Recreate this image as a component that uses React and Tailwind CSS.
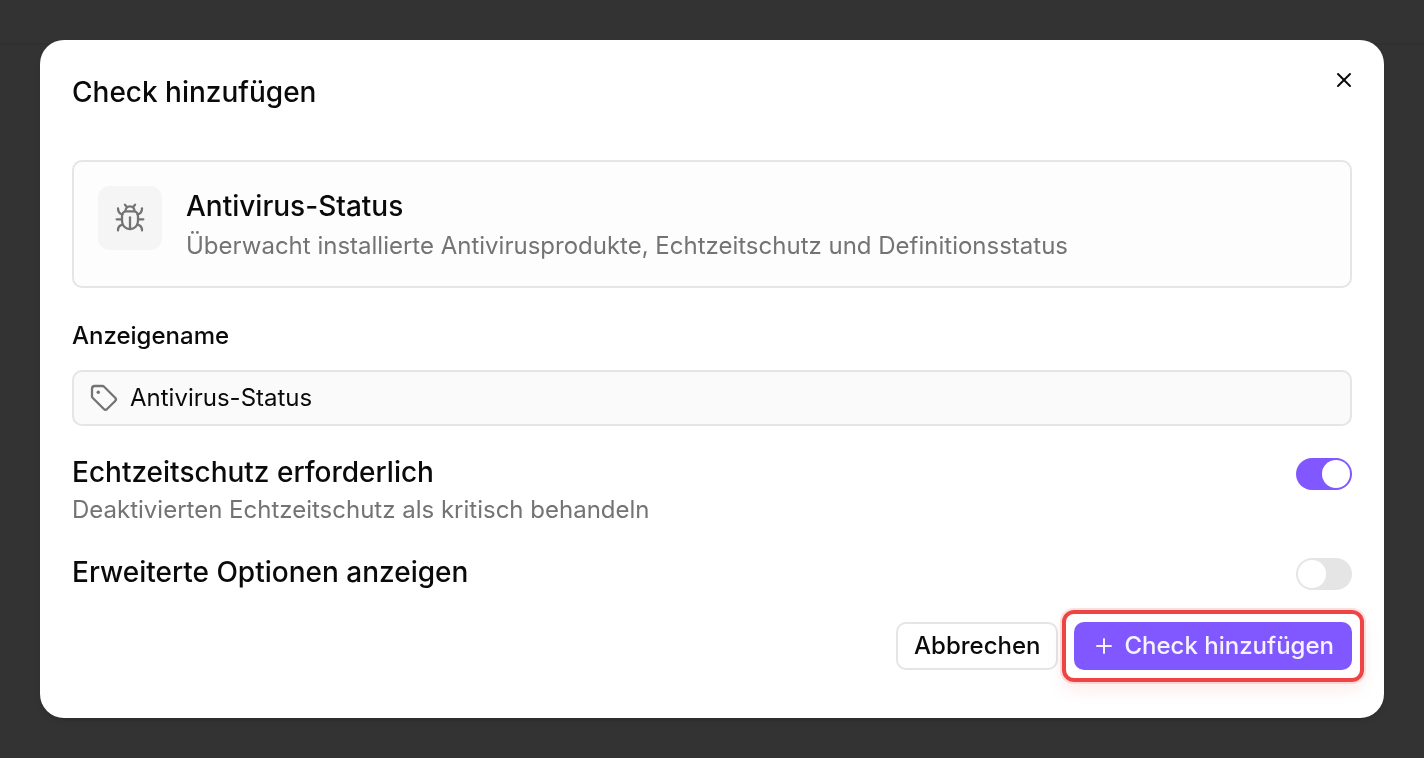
import { useState } from "react";
import { Plus, X } from "lucide-react";

function BugIcon() {
    return (
        <svg
            className="size-8"
            viewBox="0 0 24 24"
            fill="none"
            stroke="currentColor"
            strokeWidth="1.7"
            strokeLinecap="round"
            strokeLinejoin="round"
            aria-hidden="true"
        >
            <path d="M12 20.300c-3.400 0-6-2.600-6-6V10.500C6 8.500 7.200 7 9 7h6c1.800 0 3 1.500 3 3.500v3.800c0 3.400-2.600 6-6 6Z" />
            <path d="M12 20.300v-8.800" />
            <path d="M8.600 6.800c0-2.100 1.500-3.600 3.400-3.600s3.400 1.500 3.400 3.600" />
            <path d="M8.200 2l1.500 1.700M15.800 2l-1.500 1.700" />
            <path d="M3 4.700c0 2.600 1.100 4.300 3.400 4.600M21 4.700c0 2.600-1.100 4.300-3.400 4.600" />
            <path d="M2 13h4M18 13h4" />
            <path d="M3 21.300c0-2.400 1.200-4 3.700-4.300M21 21.300c0-2.400-1.200-4-3.700-4.300" />
        </svg>
    );
}

function TagIcon() {
    return (
        <svg
            className="size-8 text-neutral-500"
            viewBox="0 0 24 24"
            fill="none"
            stroke="currentColor"
            strokeWidth="1.7"
            strokeLinecap="round"
            strokeLinejoin="round"
            aria-hidden="true"
        >
            <path d="M3 5v5.600a2 2 0 0 0 .6 1.400l8.300 8.300a1.700 1.700 0 0 0 2.400 0l6.100-6.100a1.700 1.700 0 0 0 0-2.400L12.100 3.600a2 2 0 0 0-1.400-.6H5a2 2 0 0 0-2 2Z" />
            <circle cx="7.700" cy="7.700" r="1.300" fill="currentColor" stroke="none" />
        </svg>
    );
}

function Switch({ id, checked, onChange }) {
    return (
        <input
            id={id}
            type="checkbox"
            role="switch"
            checked={checked}
            onChange={(e) => onChange(e.target.checked)}
            className="mt-1 h-8 w-14 shrink-0 cursor-pointer appearance-none rounded-full bg-neutral-200 p-0.5 transition-colors before:block before:size-7 before:rounded-full before:bg-white before:transition-transform checked:bg-[#8158ff] checked:before:translate-x-6"
        />
    );
}

function App() {
    const [name, setName] = useState("Antivirus-Status");
    const [realtime, setRealtime] = useState(true);
    const [advanced, setAdvanced] = useState(false);

    return (
        <div className="min-h-screen bg-[#333333] font-['Inter',sans-serif] text-neutral-950">
            {/* Seite hinter dem Dialog */}
            <div className="h-[45px] border-b-2 border-[#303030]" />

            <div className="fixed inset-0 flex items-start justify-center overflow-auto p-10">
                <div
                    role="dialog"
                    aria-labelledby="dialog-title"
                    className="w-full rounded-3xl bg-white px-8 pt-8 pb-12 shadow-md"
                >
                    <div className="flex items-start justify-between">
                        <h1 id="dialog-title" className="pt-0.5 text-[28px] leading-9 font-medium">
                            Check hinzufügen
                        </h1>
                        <button type="button" aria-label="Schließen" className="-mt-1 -mr-1 cursor-pointer">
                            <X className="size-6" strokeWidth={2} />
                        </button>
                    </div>

                    <div className="mt-[50px] flex items-start gap-6 rounded-[10px] border-2 border-neutral-200 bg-[#fdfdfd] px-6 pt-6 pb-5">
                        <div className="flex size-16 shrink-0 items-center justify-center rounded-xl bg-neutral-100 text-neutral-500">
                            <BugIcon />
                        </div>
                        <div>
                            <h2 className="text-[28px] leading-10 font-medium">Antivirus-Status</h2>
                            <p className="text-2xl leading-10 text-neutral-500">
                                Überwacht installierte Antivirusprodukte, Echtzeitschutz und Definitionsstatus
                            </p>
                        </div>
                    </div>

                    <label htmlFor="display-name" className="mt-8 block text-2xl font-medium">
                        Anzeigename
                    </label>
                    <div className="mt-[18px] flex h-14 items-center gap-2.5 rounded-[10px] border-2 border-neutral-200 bg-neutral-50 px-3.5">
                        <TagIcon />
                        <input
                            id="display-name"
                            type="text"
                            value={name}
                            onChange={(e) => setName(e.target.value)}
                            className="min-w-0 flex-1 bg-transparent text-2xl outline-none"
                        />
                    </div>

                    <div className="mt-7 flex items-start justify-between">
                        <div>
                            <label htmlFor="realtime" className="block text-[28px] leading-9 font-medium">
                                Echtzeitschutz erforderlich
                            </label>
                            <p className="text-2xl leading-10 text-neutral-500">
                                Deaktivierten Echtzeitschutz als kritisch behandeln
                            </p>
                        </div>
                        <Switch id="realtime" checked={realtime} onChange={setRealtime} />
                    </div>

                    <div className="mt-6 flex items-start justify-between">
                        <label htmlFor="advanced" className="text-[28px] leading-9 font-medium">
                            Erweiterte Optionen anzeigen
                        </label>
                        <Switch id="advanced" checked={advanced} onChange={setAdvanced} />
                    </div>

                    <div className="mt-8 flex justify-end gap-4">
                        <button
                            type="button"
                            className="h-12 cursor-pointer rounded-[10px] border-2 border-neutral-200 bg-white px-4 text-2xl font-medium"
                        >
                            Abbrechen
                        </button>
                        <div className="relative">
                            <button
                                type="button"
                                className="flex h-12 cursor-pointer items-center gap-2 rounded-[10px] border-2 border-[#8158ff] bg-[#8158ff] px-4 text-2xl font-medium text-[#f5f3ff]"
                            >
                                <Plus className="size-6" strokeWidth={2} />
                                Check hinzufügen
                            </button>
                            {/* Markierung um den Button */}
                            <span className="pointer-events-none absolute -inset-3 rounded-xl border-4 border-[#ef4444] shadow-[0_0_0_2px_rgba(239,68,68,0.15),0_8px_16px_rgba(239,68,68,0.1)]" />
                        </div>
                    </div>
                </div>
            </div>
        </div>
    );
}

export default App;
